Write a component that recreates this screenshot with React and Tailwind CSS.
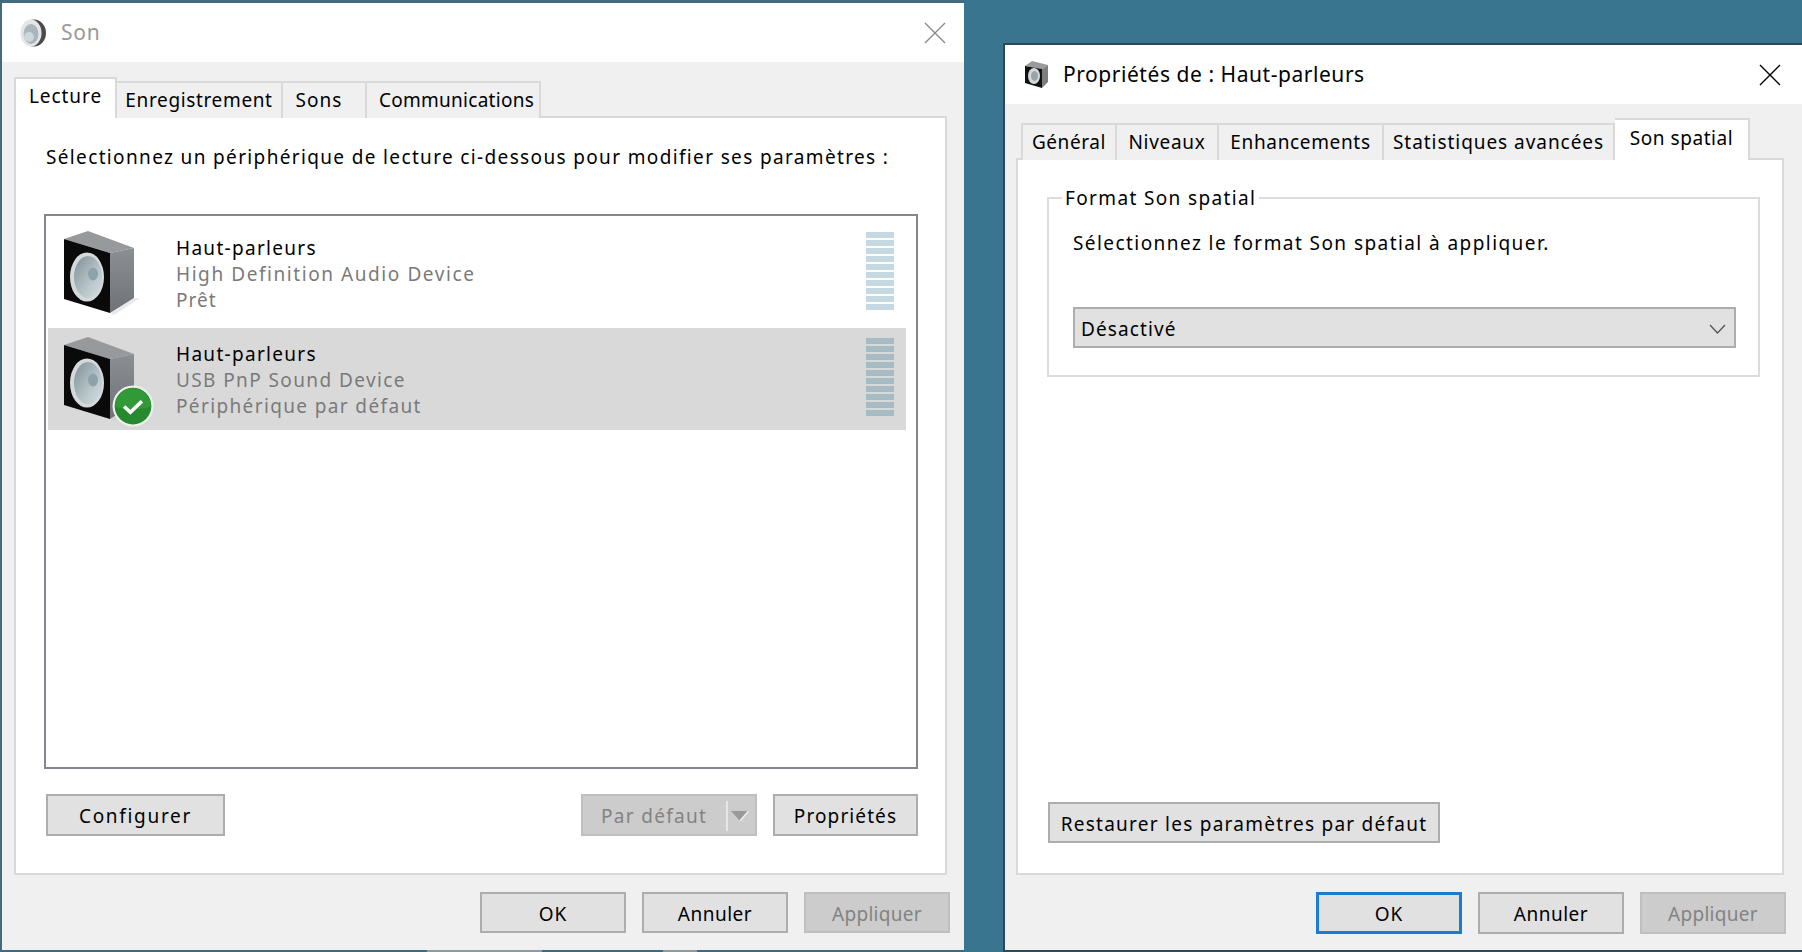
import React from "react";

const font = { fontFamily: '"Noto Sans", "Open Sans", sans-serif' };

function Speaker({ className }) {
  return (
    <svg className={className} viewBox="0 0 80 90" fill="none">
      <defs>
        <linearGradient id="cone" x1="0" y1="0" x2="1" y2="1">
          <stop offset="0" stopColor="#7f8f96" />
          <stop offset="0.55" stopColor="#b3c1c6" />
          <stop offset="1" stopColor="#d5dfe1" />
        </linearGradient>
        <linearGradient id="sideface" x1="0" y1="0" x2="0" y2="1">
          <stop offset="0" stopColor="#8b8f94" />
          <stop offset="1" stopColor="#6f7176" />
        </linearGradient>
      </defs>
      <polygon points="4,10 28,2 74,19 50,24" fill="#979a9d" />
      <polygon points="50,24 74,19 74,69 50,84" fill="url(#sideface)" />
      <polygon points="4,10 50,24 50,84 4,70" fill="#0a0a0a" />
      <polygon points="50,84 74,69 80,69 54,86" fill="#c9c9c9" opacity="0.4" />
      <ellipse cx="27" cy="48" rx="17" ry="24.5" fill="#d4d9da" />
      <ellipse cx="28" cy="48" rx="14" ry="21" fill="url(#cone)" />
      <ellipse cx="33" cy="45" rx="5" ry="6.5" fill="#8ea2aa" />
    </svg>
  );
}

function TitleSpeaker({ className }) {
  return (
    <svg className={className} viewBox="0 0 26 28" fill="none">
      <ellipse cx="14" cy="14" rx="12" ry="13.5" fill="#4a4a4a" />
      <ellipse cx="11" cy="14" rx="10.5" ry="13.5" fill="#e4e6e6" />
      <ellipse cx="11" cy="15" rx="7.5" ry="10" fill="#a9b6bb" />
      <ellipse cx="9" cy="18" rx="5" ry="5" fill="#cdd6d9" />
    </svg>
  );
}

function SmallSpeaker({ className }) {
  return (
    <svg className={className} viewBox="0 0 24 27" fill="none">
      <polygon points="1,5 8,0 24,4 18,8" fill="#9b9b9b" />
      <polygon points="18,8 24,4 24,21 18,27" fill="#7d7d7d" />
      <polygon points="1,5 18,8 18,27 1,22" fill="#111" />
      <ellipse cx="10" cy="15" rx="6" ry="8" fill="#d3d8da" />
      <ellipse cx="10.5" cy="15" rx="3.5" ry="5" fill="#9aa5aa" />
    </svg>
  );
}

function Check({ className }) {
  return (
    <svg className={className} viewBox="0 0 40 40" fill="none">
      <circle cx="20" cy="20" r="19.5" fill="#eef2ee" />
      <circle cx="20" cy="20" r="17.5" fill="#27892e" />
      <path d="M3 20a17 17 0 0 1 34 0c-5 4-29 4-34 0z" fill="#3aa33f" opacity="0.6" />
      <path d="M11.5 20.5l6 5.5 11-10.5" stroke="#ffffff" strokeWidth="3.4" />
    </svg>
  );
}

function Meter({ colorClass }) {
  const bars = [0, 1, 2, 3, 4, 5, 6, 7, 8, 9];
  return (
    <div className="flex flex-col gap-[2px] w-[28px]">
      {bars.map((b) => (
        <div key={b} className={`h-[6px] ${colorClass}`} />
      ))}
    </div>
  );
}

function Btn({ className = "", children }) {
  return (
    <button className={`flex items-center justify-center border-2 border-[#adadad] bg-[#e1e1e1] pt-[2px] text-black ${className}`}>
      {children}
    </button>
  );
}

function Disabled({ className = "", children }) {
  return (
    <button className={`flex items-center justify-center border-2 border-[#bfbfbf] bg-[#cccccc] pt-[2px] text-[#838383] ${className}`}>
      {children}
    </button>
  );
}

function Tab({ className = "", children }) {
  return (
    <div className={`flex h-[37px] items-center justify-center border-2 border-b-0 border-l-0 border-[#d9d9d9] bg-[#f0f0f0] pb-[2px] text-black ${className}`}>
      {children}
    </div>
  );
}

function Device({ active, name, sub, status, subClass, statusClass }) {
  return (
    <div className={`flex h-[102px] items-stretch pl-[12px] pr-[12px] ${active ? "bg-[#d9d9d9]" : "bg-white"}`}>
      <div className="relative mt-[7px] h-[90px] w-[80px]">
        <Speaker className="h-[90px] w-[80px]" />
        {active && <Check className="absolute left-[52px] top-[50px] h-[42px] w-[42px]" />}
      </div>
      <div className="ml-[36px] flex flex-1 flex-col justify-center pt-[2px] leading-[26px]">
        <div className="tracking-[1.3px] text-black">{name}</div>
        <div className={`text-[#7a7a7a] ${subClass}`}>{sub}</div>
        <div className={`text-[#7a7a7a] ${statusClass}`}>{status}</div>
      </div>
      <div className="mt-[10px] mr-0">
        <Meter colorClass={active ? "bg-[#a5bcc4]" : "bg-[#c5d9e0]"} />
      </div>
    </div>
  );
}

function CloseX({ className }) {
  return (
    <svg className={className} viewBox="0 0 22 22" fill="none" stroke="currentColor" strokeWidth="1.4">
      <path d="M1 1l20 20M21 1L1 21" />
    </svg>
  );
}

export default function App() {
  return (
    <div style={font} className="flex h-[952px] w-[1802px] overflow-hidden bg-[#39758f] text-[19px] leading-[26px]">
      {/* Left window */}
      <div className="flex h-[952px] w-[964px] shrink-0 flex-col border-l-2 border-t-[3px] border-[#446b7c]">
        <div className="flex h-[59px] shrink-0 items-center bg-white pl-[18px] pr-[18px] text-[#999999]">
          <TitleSpeaker className="h-[28px] w-[26px]" />
          <span className="ml-[15px] pb-[2px] text-[21px] tracking-[0.8px]">Son</span>
          <CloseX className="ml-auto h-[22px] w-[22px] text-[#8a8a8a]" />
        </div>
        <div className="flex h-[888px] shrink-0 flex-col bg-[#f0f0f0]">
          <div className="relative z-10 mt-[15px] flex h-[41px] items-end pl-[12px] -mb-[2px]">
            <div className="flex h-[41px] w-[103px] items-start justify-center border-2 border-b-0 border-[#d9d9d9] bg-white pt-[4px] tracking-[0.95px] text-black">Lecture</div>
            <Tab className="w-[166px] tracking-[0.64px]">Enregistrement</Tab>
            <Tab className="w-[84px] pr-[10px] tracking-[1px]">Sons</Tab>
            <Tab className="w-[174px] pl-[7px] tracking-[0.27px]">Communications</Tab>
          </div>
          <div className="ml-[12px] flex h-[759px] w-[933px] flex-col border-2 border-[#d9d9d9] bg-white pl-[28px] pr-[27px]">
            <div className="mt-[26px] ml-[2px] whitespace-nowrap tracking-[1.35px]">Sélectionnez un périphérique de lecture ci-dessous pour modifier ses paramètres :</div>
            <div className="mt-[44px] flex h-[555px] flex-col gap-[4px] border-2 border-[#828790] pl-[2px] pr-[10px] pt-[6px]">
              <Device name="Haut-parleurs" sub="High Definition Audio Device" status="Prêt" subClass="tracking-[1.57px]" statusClass="tracking-[1px]" />
              <Device active name="Haut-parleurs" sub="USB PnP Sound Device" status="Périphérique par défaut" subClass="tracking-[1.4px]" statusClass="tracking-[1.37px]" />
            </div>
            <div className="mt-[25px] flex h-[42px] pl-[2px]">
              <Btn className="w-[179px] tracking-[1.7px]">Configurer</Btn>
              <Disabled className="ml-auto w-[176px] justify-start pl-[18px]">
                <span className="tracking-[1.3px]">Par défaut</span>
                <span className="ml-auto flex h-[30px] items-center">
                  <span className="h-[30px] w-[2px] bg-[#e6e6e6]" />
                  <svg className="ml-[3px] mr-[6px] h-[10px] w-[18px]" viewBox="0 0 18 10">
                    <polygon points="0,0 18,0 9,10" fill="#9a9a9a" />
                    <path d="M17.5 0L9 10" stroke="#f2f2f2" strokeWidth="1.5" />
                  </svg>
                </span>
              </Disabled>
              <Btn className="ml-[16px] w-[145px] tracking-[1.1px]">Propriétés</Btn>
            </div>
          </div>
          <div className="mt-[17px] flex h-[41px] justify-end gap-[16px] pr-[14px]">
            <Btn className="w-[146px] tracking-[1px]">OK</Btn>
            <Btn className="w-[146px] tracking-[0.5px]">Annuler</Btn>
            <Disabled className="w-[146px] tracking-[0.3px]">Appliquer</Disabled>
          </div>
        </div>
        <div className="flex h-[2px] shrink-0 bg-[#3d6c82]">
          <div className="ml-[425px] w-[115px] bg-[#8d9aa0]" />
          <div className="ml-[121px] w-[34px] bg-[#8d9aa0]" />
        </div>
      </div>

      {/* Right window */}
      <div className="ml-[39px] mt-[43px] flex h-[909px] w-[799px] shrink-0 flex-col border-2 border-r-0 border-[#2a4a5a]">
        <div className="flex h-[59px] shrink-0 items-center bg-white pl-[19px] pr-[21px] text-black">
          <SmallSpeaker className="h-[27px] w-[24px]" />
          <span className="ml-[15px] pb-[2px] text-[21px] tracking-[0.55px]">Propriétés de : Haut-parleurs</span>
          <CloseX className="ml-auto h-[22px] w-[22px] text-black" />
        </div>
        <div className="flex flex-1 flex-col bg-[#f0f0f0]">
          <div className="relative z-10 mt-[14px] flex h-[42px] items-end pl-[16px] -mb-[2px]">
            <Tab className="w-[96px] border-l-2 tracking-[0.6px]">Général</Tab>
            <Tab className="w-[102px] tracking-[0.7px]">Niveaux</Tab>
            <Tab className="w-[165px] tracking-[0.65px]">Enhancements</Tab>
            <Tab className="w-[231px] tracking-[0.95px]">Statistiques avancées</Tab>
            <div className="flex h-[42px] w-[135px] items-start justify-center border-2 border-b-0 border-l-0 border-[#d9d9d9] bg-white pt-[5px] tracking-[0.55px] text-black">Son spatial</div>
          </div>
          <div className="ml-[11px] flex h-[717px] w-[768px] flex-col border-2 border-[#d9d9d9] bg-white pb-[30px] pl-[29px]">
            <fieldset className="mt-[25px] h-[192px] w-[713px] border-2 border-[#dcdcdc] pl-[24px] pr-[22px]">
              <legend className="ml-[-11px] px-[3px] tracking-[1.36px] text-black">Format Son spatial</legend>
              <div className="mt-[19px] tracking-[1.43px]">Sélectionnez le format Son spatial à appliquer.</div>
              <div className="mt-[51px] flex h-[41px] items-center border-2 border-[#adadad] bg-[#e1e1e1] pl-[6px] pr-[8px] pt-[2px]">
                <span className="tracking-[1.1px]">Désactivé</span>
                <svg className="ml-auto h-[10px] w-[17px]" viewBox="0 0 17 10" fill="none" stroke="#555555" strokeWidth="1.3">
                  <path d="M1 1l7.5 8L16 1" />
                </svg>
              </div>
            </fieldset>
            <Btn className="ml-[1px] mt-auto h-[41px] w-[392px] tracking-[1.25px]">Restaurer les paramètres par défaut</Btn>
          </div>
          <div className="mt-[17px] flex h-[42px] justify-end gap-[16px] pr-[16px]">
            <button className="flex w-[146px] items-center justify-center border-[3px] border-[#1b7bd0] bg-[#e1e1e1] pt-[2px] tracking-[1px] text-black">OK</button>
            <Btn className="w-[146px] tracking-[0.5px]">Annuler</Btn>
            <Disabled className="w-[146px] tracking-[0.3px]">Appliquer</Disabled>
          </div>
        </div>
      </div>
    </div>
  );
}
